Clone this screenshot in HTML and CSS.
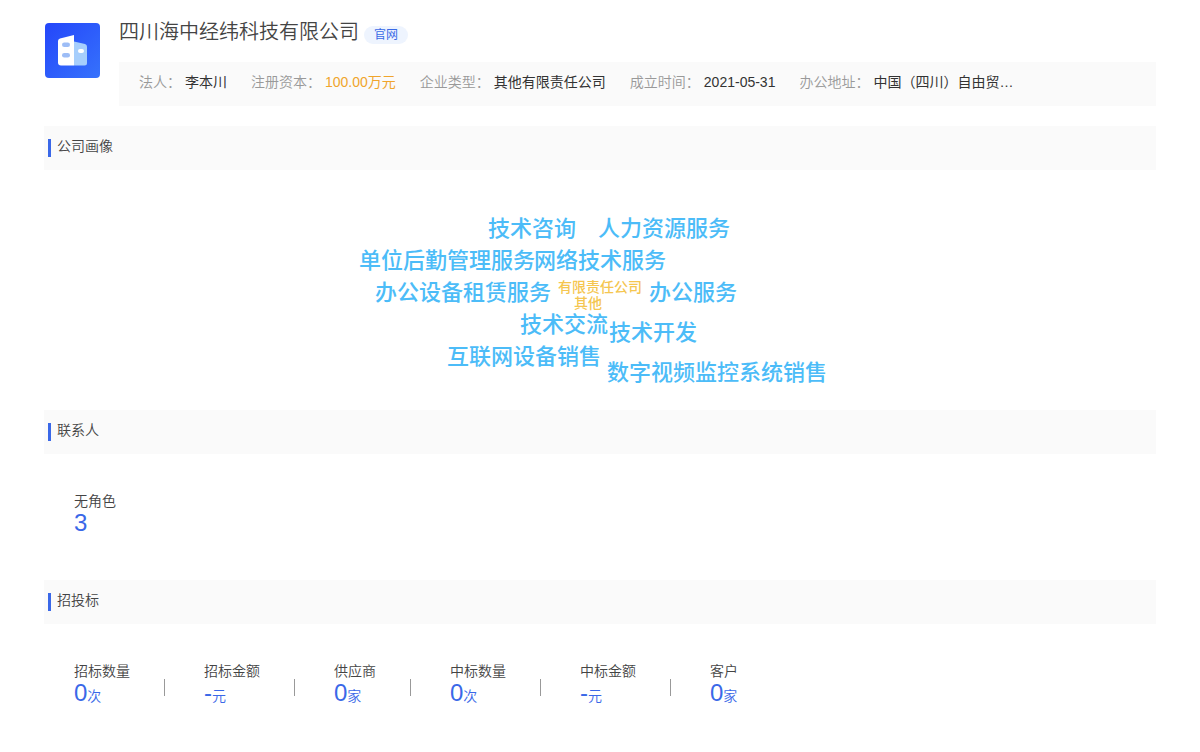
FILE: index.html
```html
<!DOCTYPE html>
<html lang="zh-CN">
<head>
<meta charset="utf-8">
<meta name="viewport" content="width=device-width, initial-scale=1">
<title>四川海中经纬科技有限公司</title>
<link rel="stylesheet" href="styles.css">
</head>
<body>
<main class="page">
  <header class="company">
    <svg class="logo" viewBox="0 0 55 55" aria-hidden="true">
      <defs>
        <linearGradient id="bg" x1="0" y1="0" x2="1" y2="1"><stop offset="0" stop-color="#2446fa"/><stop offset="1" stop-color="#3672fc"/></linearGradient>
      </defs>
      <rect width="55" height="55" rx="4" fill="url(#bg)"/>
      <path d="M29 18.500L40 21Q42 21.500 42 23.500V40Q42 42.500 39.500 42.500H29Z" fill="#a6cefc"/>
      <path d="M15 15.500L29 12V42.500H16Q13 42.500 13 39.500V18Q13 16 15 15.500Z" fill="#fff"/>
      <rect x="17" y="19.500" width="8" height="4.500" rx="2.250" fill="#9dbdf6"/>
      <rect x="17" y="30" width="8" height="4.500" rx="2.250" fill="#9dbdf6"/>
      <rect x="33" y="26" width="6" height="4" rx="2" fill="#fff"/>
    </svg>
    <div class="company-main">
      <div class="title-row">
        <h1 class="name">四川海中经纬科技有限公司</h1>
        <a class="site" href="#">官网</a>
      </div>
      <dl class="facts">
        <div class="fact"><dt>法人：</dt><dd>李本川</dd></div>
        <div class="fact"><dt>注册资本：</dt><dd class="money">100.00万元</dd></div>
        <div class="fact"><dt>企业类型：</dt><dd>其他有限责任公司</dd></div>
        <div class="fact"><dt>成立时间：</dt><dd>2021-05-31</dd></div>
        <div class="fact"><dt>办公地址：</dt><dd>中国（四川）自由贸…</dd></div>
      </dl>
    </div>
  </header>

  <section>
    <h2 class="heading">公司画像</h2>
    <div class="cloud">
      <span class="word w1">技术咨询</span>
      <span class="word w2">人力资源服务</span>
      <span class="word w3">单位后勤管理服务</span>
      <span class="word w4">网络技术服务</span>
      <span class="word w5">办公设备租赁服务</span>
      <span class="word small w6">有限责任公司</span>
      <span class="word small w7">其他</span>
      <span class="word w8">办公服务</span>
      <span class="word w9">技术交流</span>
      <span class="word w10">技术开发</span>
      <span class="word w11">互联网设备销售</span>
      <span class="word w12">数字视频监控系统销售</span>
    </div>
  </section>

  <section>
    <h2 class="heading">联系人</h2>
    <dl class="stats">
      <div class="stat"><dt>无角色</dt><dd>3</dd></div>
    </dl>
  </section>

  <section>
    <h2 class="heading">招投标</h2>
    <dl class="stats">
      <div class="stat"><dt>招标数量</dt><dd>0<small>次</small></dd></div>
      <div class="stat"><dt>招标金额</dt><dd>-<small>元</small></dd></div>
      <div class="stat"><dt>供应商</dt><dd>0<small>家</small></dd></div>
      <div class="stat"><dt>中标数量</dt><dd>0<small>次</small></dd></div>
      <div class="stat"><dt>中标金额</dt><dd>-<small>元</small></dd></div>
      <div class="stat"><dt>客户</dt><dd>0<small>家</small></dd></div>
    </dl>
  </section>
</main>
</body>
</html>
```
FILE: styles.css
```css
* { box-sizing: border-box; }
body {
  margin: 0;
  background: #fff;
  color: #444;
  font: 350 14px/20px "Liberation Sans", "Noto Sans CJK SC", sans-serif;
}
h1, h2, dl, dd { margin: 0; font-weight: inherit; }
.page { padding: 16px 44px 0; }

.company { display: flex; gap: 20px; margin-bottom: 20px; }
.logo { flex: none; width: 55px; height: 55px; margin: 7px 0 0 1px; }
.company-main { flex: 1; min-width: 0; margin-left: -1px; }
.title-row { display: flex; align-items: center; gap: 5px; height: 46px; padding-bottom: 14px; }
.name { font-size: 20px; line-height: 30px; }
.site {
  margin-top: 6px;
  padding: 0 10px;
  border-radius: 9px;
  background: #eef4fe;
  color: #3a6ae6;
  font-size: 12px;
  font-weight: 400;
  line-height: 18px;
  text-decoration: none;
}
.facts {
  display: flex;
  flex-wrap: wrap;
  gap: 0 24px;
  padding: 10px 20px 14px;
  background: #fafafa;
}
.fact { display: flex; gap: 4px; }
.fact dt { color: #999; }
.fact dd { color: #333; font-weight: 400; }
.fact .money { color: #f0a52c; }

.heading {
  display: flex;
  align-items: center;
  gap: 6px;
  height: 44px;
  padding: 0 4px 4px;
  background: #fafafa;
  font-size: 14px;
}
.heading::before {
  content: "";
  width: 3px;
  height: 18px;
  margin-top: 4px;
  background: #3a68e8;
}

.cloud { position: relative; width: 480px; height: 240px; margin: 0 auto; }
.word {
  position: absolute;
  color: #4cbcf8;
  font-size: 22px;
  font-weight: 500;
  line-height: 32px;
  white-space: nowrap;
}
.word.small { color: #f5c650; font-size: 14px; line-height: 16px; }
.w1 { left: 128px; top: 43px; }
.w2 { left: 238px; top: 43px; }
.w3 { left: -1px; top: 75px; }
.w4 { left: 174px; top: 75px; }
.w5 { left: 15px; top: 107px; }
.w6 { left: 198px; top: 109px; }
.w7 { left: 214px; top: 125px; }
.w8 { left: 289px; top: 107px; }
.w9 { left: 160px; top: 139px; }
.w10 { left: 249px; top: 147px; }
.w11 { left: 87px; top: 171px; }
.w12 { left: 247px; top: 187px; }

.stats {
  display: flex;
  flex-wrap: wrap;
  gap: 39px;
  padding: 37px 30px 45px;
}
.stat {
  padding-right: 35px;
  background: linear-gradient(#999, #999) right 18px / 1px 17px no-repeat;
}
.stat:last-child { background: none; }
.stat dd { color: #3a68e8; font-size: 24px; line-height: 24px; }
.stat small { font-size: 14px; }
```
